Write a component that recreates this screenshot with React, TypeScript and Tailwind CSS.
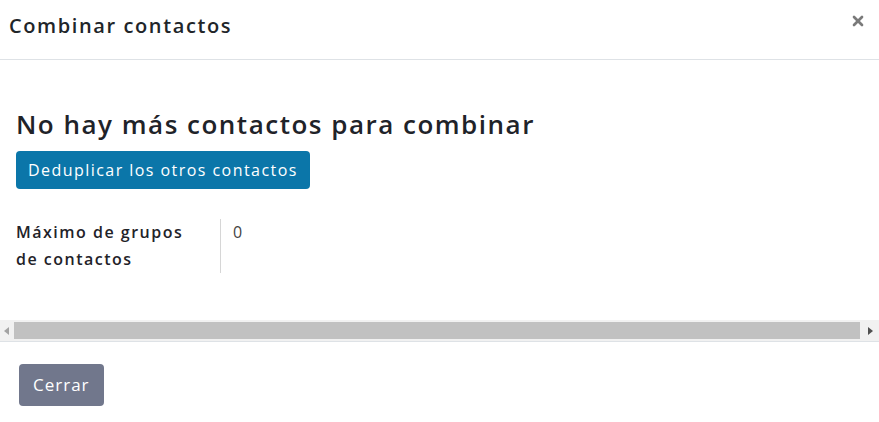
import { X } from "lucide-react";

export default function App() {
  return (
    <div
      className="w-[879px] h-[422px] bg-white flex flex-col text-[#212529] overflow-hidden"
      style={{ fontFamily: '"Open Sans", "Liberation Sans", sans-serif' }}
    >
      {/* HEADER */}
      <div className="h-[60px] border-b border-[#dee2e6] flex items-center justify-between pl-[9px] pr-[13px]">
        <h4 className="text-[20px] font-semibold tracking-[1.6px] text-[#212529] -mt-[7px]">
          Combinar contactos
        </h4>
        <button type="button" className="text-[#7a7a7a] -mt-[17px]">
          <X size={16} strokeWidth={4} />
        </button>
      </div>

      {/* BODY */}
      <div className="flex-1 flex flex-col">
        <div className="px-4 pt-[48px]">
          <h2 className="text-[26px] font-semibold tracking-[1.5px] text-[#1f2329] leading-[32px]">
            No hay más contactos para combinar
          </h2>
          <button
            type="button"
            className="mt-[11px] h-[38px] px-[12px] rounded-[4px] bg-[#0b76a9] text-white text-[16px] tracking-[1.45px] leading-none"
          >
            Deduplicar los otros contactos
          </button>

          <div className="mt-[30px] flex">
            <div className="w-[205px] pr-2 font-semibold text-[16px] tracking-[1.5px] leading-[27px] text-[#1f2329] border-r border-[#d6d6d6]">
              Máximo de grupos
              <br />
              de contactos
            </div>
            <div className="pl-[12px] text-[16px] leading-[27px] text-[#444]">0</div>
          </div>
        </div>

        {/* SCROLLBAR */}
        <div className="mt-auto h-[22px] bg-[#f1f1f1] flex items-center border-b border-[#dee2e6]">
          <div className="w-[14px] flex justify-center">
            <svg width="6" height="8" viewBox="0 0 6 8">
              <path d="M5 0 L0 4 L5 8 Z" fill="#a3a3a3" />
            </svg>
          </div>
          <div className="flex-1 h-[17px] bg-[#c1c1c1]" />
          <div className="w-[19px] flex justify-center">
            <svg width="6" height="8" viewBox="0 0 6 8">
              <path d="M1 0 L6 4 L1 8 Z" fill="#505050" />
            </svg>
          </div>
        </div>
      </div>

      {/* FOOTER */}
      <div className="h-[80px] px-[19px] pt-[22px]">
        <button
          type="button"
          className="h-[42px] px-[14px] rounded-[4px] bg-[#71778c] text-white text-[17px] tracking-[1px]"
        >
          Cerrar
        </button>
      </div>
    </div>
  );
}
